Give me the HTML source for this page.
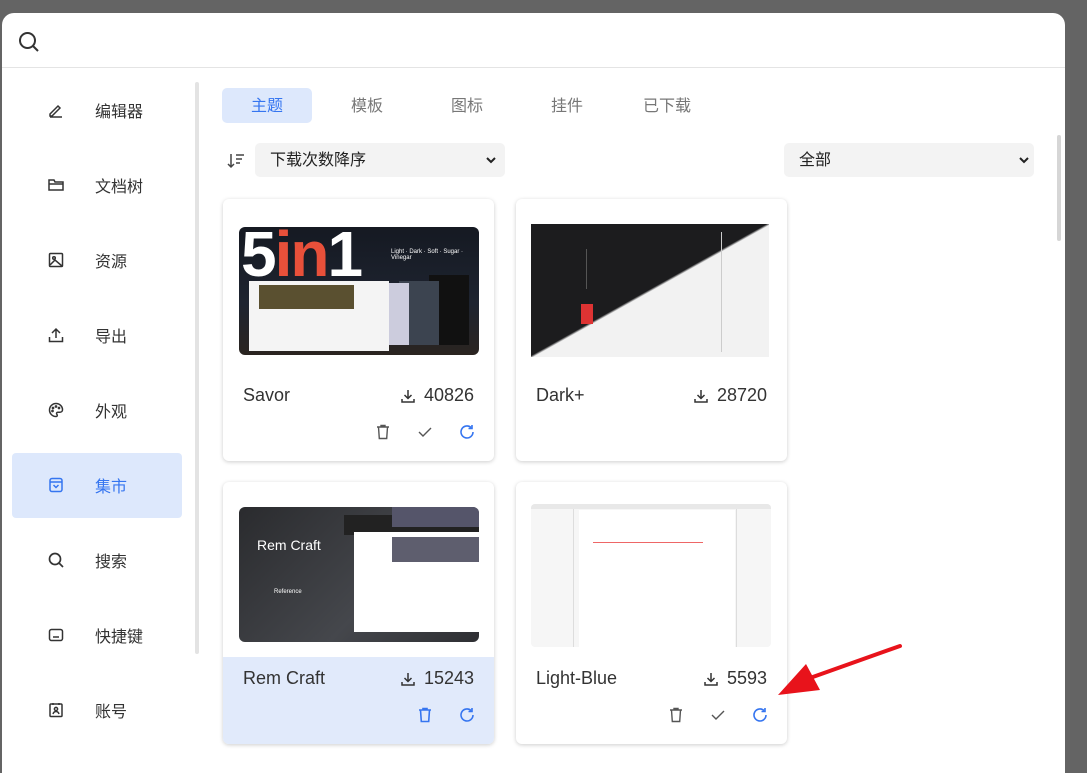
<!DOCTYPE html>
<html><head><meta charset="utf-8"><style>
*{margin:0;padding:0;box-sizing:border-box}
body{width:1087px;height:756px;background:#646464;position:relative;overflow:hidden;font-family:"Liberation Sans","Noto Sans CJK SC",sans-serif;color:#222}
.dlg{position:absolute;left:2px;top:13px;width:1063px;height:760px;background:#fff;border-radius:12px 12px 0 0;overflow:hidden}
.abs{position:absolute}
.hdr{position:absolute;left:0;top:54px;width:1063px;height:1px;background:#e4e4e4}
.nav{position:absolute;left:93px;font-size:16px;color:#333;line-height:20px;margin-top:2px}
.ico{position:absolute;left:45px;width:18px;height:18px}
.act{position:absolute;left:10px;top:440px;width:170px;height:65px;background:#dde8fc;border-radius:4px}
.tab{position:absolute;top:76px;height:35px;line-height:35px;font-size:16px;color:#777;text-align:center;width:90px}
.sel{position:absolute;top:130px;height:34px;background:#f3f3f3;border-radius:5px;font-size:16px;line-height:36px;padding-left:15px;color:#222}
.card{position:absolute;width:271px;height:262px;background:#fff;border-radius:6px;box-shadow:0 1px 4px rgba(0,0,0,.2);overflow:hidden}
.img{position:absolute;left:16px;top:28px;width:240px;height:128px;border-radius:6px;overflow:hidden}
.nm{position:absolute;left:20px;top:186px;font-size:18px;color:#333}
.dl{position:absolute;right:20px;top:186px;font-size:18px;color:#333;display:flex;align-items:center;gap:8px}
.acts{position:absolute;right:18px;top:224px;display:flex;gap:24px}
</style></head><body>
<div class="dlg">
<svg class="abs" style="left:15px;top:17px" width="24" height="24" viewBox="0 0 24 24" fill="none" stroke="#333" stroke-width="2"><circle cx="10.5" cy="10.5" r="7.5"/><path d="M16 16l5 5"/></svg>
<div class="hdr"></div>
<div class="abs" style="left:193px;top:69px;width:4px;height:572px;background:#e3e3e3;border-radius:2px"></div>
<div class="act"></div>
<svg class="ico" style="top:88px" viewBox="0 0 18 18" fill="none" stroke="#333" stroke-width="1.5"><path d="M3 13l8-8 2 2-8 8H3zM3 16h12"/></svg>
<div class="nav" style="top:88px">编辑器</div>
<svg class="ico" style="top:163px" viewBox="0 0 18 18" fill="none" stroke="#333" stroke-width="1.5"><path d="M2 4h5l1 2h8v8H2zM2 8h14"/></svg>
<div class="nav" style="top:163px">文档树</div>
<svg class="ico" style="top:238px" viewBox="0 0 18 18" fill="none" stroke="#333" stroke-width="1.5"><rect x="2.5" y="2.5" width="13" height="13" rx="1"/><circle cx="7" cy="7" r="1.3"/><path d="M3 14l5-5 7 6"/></svg>
<div class="nav" style="top:238px">资源</div>
<svg class="ico" style="top:313px" viewBox="0 0 18 18" fill="none" stroke="#333" stroke-width="1.5"><path d="M9 12V3M5 7l4-4 4 4M2.5 11v4.5h13V11"/></svg>
<div class="nav" style="top:313px">导出</div>
<svg class="ico" style="top:388px" viewBox="0 0 18 18" fill="none" stroke="#333" stroke-width="1.5"><path d="M9 2.5a6.5 6.5 0 1 0 0 13c1.5 0 1.5-1.5.8-2.3-.7-.8 0-2 1-2h2.2c1.5 0 2.5-1 2.5-2.5 0-3.5-3-6.2-6.5-6.2z"/><circle cx="6" cy="7" r=".6"/><circle cx="9" cy="5.5" r=".6"/><circle cx="12" cy="7" r=".6"/><circle cx="5.5" cy="10" r=".6"/></svg>
<div class="nav" style="top:388px">外观</div>
<svg class="ico" style="top:463px" viewBox="0 0 18 18" fill="none" stroke="#3575f0" stroke-width="1.5"><rect x="3" y="2.5" width="12" height="13" rx="2"/><path d="M3 6h12M6.5 9l2.5 2.5L11.5 9"/></svg>
<div class="nav" style="top:463px;color:#3575f0">集市</div>
<svg class="ico" style="top:538px" viewBox="0 0 18 18" fill="none" stroke="#333" stroke-width="1.7"><circle cx="8" cy="8" r="5.5"/><path d="M12 12l4 4"/></svg>
<div class="nav" style="top:538px">搜索</div>
<svg class="ico" style="top:613px" viewBox="0 0 18 18" fill="none" stroke="#333" stroke-width="1.5"><rect x="2.5" y="3.5" width="13" height="11" rx="2"/><path d="M6 11h6"/></svg>
<div class="nav" style="top:613px">快捷键</div>
<svg class="ico" style="top:688px" viewBox="0 0 18 18" fill="none" stroke="#333" stroke-width="1.5"><rect x="3" y="3" width="12" height="12.5" rx="1"/><path d="M6 2v2M12 2v2"/><circle cx="9" cy="8" r="1.6"/><path d="M6 13c.5-1.7 1.5-2.5 3-2.5s2.5.8 3 2.5"/></svg>
<div class="nav" style="top:688px">账号</div>

<div class="tab" style="left:220px;top:75px;background:#dde8fc;border-radius:5px;color:#3575f0;line-height:37px">主题</div>
<div class="tab" style="left:320px">模板</div>
<div class="tab" style="left:420px">图标</div>
<div class="tab" style="left:520px">挂件</div>
<div class="tab" style="left:620px">已下载</div>

<svg class="abs" style="left:224px;top:138px" width="20" height="20" viewBox="0 0 20 20" fill="none" stroke="#444" stroke-width="1.5"><path d="M5 3v13M2 13l3 3 3-3M10 4h8M10 8h6M10 12h4"/></svg>
<div class="sel" style="left:253px;width:250px">下载次数降序<svg class="abs" style="right:8px;top:12px" width="12" height="10" viewBox="0 0 12 10" fill="none" stroke="#222" stroke-width="2"><path d="M2 3l4 4 4-4"/></svg></div>
<div class="sel" style="left:782px;width:250px">全部<svg class="abs" style="right:4px;top:12px" width="12" height="10" viewBox="0 0 12 10" fill="none" stroke="#222" stroke-width="2"><path d="M2 3l4 4 4-4"/></svg></div>
<div class="abs" style="left:1055px;top:122px;width:4px;height:106px;background:#d6d6d6;border-radius:2px"></div>

<div class="card" style="left:221px;top:186px">
<div class="img" style="background:linear-gradient(180deg,#151922 0%,#1e2430 60%,#2a2420 100%)">
<div class="abs" style="left:2px;top:-10px;font:bold 64px 'Liberation Sans';color:#fff;letter-spacing:-2px">5<span style="color:#e8503a">in</span>1</div>
<div class="abs" style="left:152px;top:22px;font-size:6px;color:#fff">Light · Dark · Soft · Sugar · Vinegar</div>
<div class="abs" style="left:190px;top:48px;width:40px;height:70px;background:#111"></div>
<div class="abs" style="left:160px;top:54px;width:40px;height:64px;background:#3c4450"></div>
<div class="abs" style="left:120px;top:56px;width:50px;height:62px;background:#ccd"></div>
<div class="abs" style="left:10px;top:54px;width:140px;height:70px;background:#f4f4f4"></div>
<div class="abs" style="left:20px;top:58px;width:95px;height:24px;background:#5a5030"></div>
</div>
<div class="nm">Savor</div>
<div class="dl"><svg width="16" height="16" viewBox="0 0 16 16" fill="none" stroke="#333" stroke-width="1.5"><path d="M8 2v8M4.5 7L8 10.5 11.5 7M2 11v3h12v-3"/></svg>40826</div>
<div class="acts">
<svg width="18" height="18" viewBox="0 0 18 18" fill="none" stroke="#555" stroke-width="1.4"><path d="M3 4h12M7 4V2.5h4V4M4.5 4l.8 11.5h7.4L13.5 4"/></svg>
<svg width="18" height="18" viewBox="0 0 18 18" fill="none" stroke="#555" stroke-width="1.4"><path d="M3 9l4 4 8-8"/></svg>
<svg width="18" height="18" viewBox="0 0 18 18" fill="none" stroke="#3575f0" stroke-width="1.6"><path d="M15 9a6 6 0 1 1-2-4.5M14 2v3.5h-3.5"/></svg>
</div></div>

<div class="card" style="left:514px;top:186px">
<div class="img" style="left:15px;top:25px;width:238px;height:133px;border-radius:0;background:linear-gradient(to bottom right,#1c1c1e 49.5%,#f2f2f2 50.5%)">
<div class="abs" style="left:55px;top:25px;width:30px;height:40px;border-left:1px solid #555"></div>
<div class="abs" style="left:50px;top:80px;width:12px;height:20px;background:#d33"></div>
<div class="abs" style="left:190px;top:8px;width:1px;height:120px;background:#ccc"></div>
</div>
<div class="nm">Dark+</div>
<div class="dl"><svg width="16" height="16" viewBox="0 0 16 16" fill="none" stroke="#333" stroke-width="1.5"><path d="M8 2v8M4.5 7L8 10.5 11.5 7M2 11v3h12v-3"/></svg>28720</div>
</div>

<div class="card" style="left:221px;top:469px">
<div class="abs" style="left:0;top:175px;width:271px;height:87px;background:#e1eafb"></div>
<div class="img" style="top:25px;height:135px;background:linear-gradient(135deg,#2a2b2e,#45474c 60%,#2e2f33)">
<div class="abs" style="left:18px;top:30px;font-size:14px;color:#fff">Rem Craft</div>
<div class="abs" style="left:35px;top:82px;font-size:6px;color:#fff">Reference</div>
<div class="abs" style="left:105px;top:8px;width:135px;height:20px;background:#222"></div>
<div class="abs" style="left:115px;top:25px;width:125px;height:100px;background:#fff"></div>
<div class="abs" style="left:153px;top:30px;width:87px;height:25px;background:#5e5e6e"></div>
<div class="abs" style="left:153px;top:0;width:87px;height:20px;background:#55556a"></div>
</div>
<div class="nm">Rem Craft</div>
<div class="dl"><svg width="16" height="16" viewBox="0 0 16 16" fill="none" stroke="#333" stroke-width="1.5"><path d="M8 2v8M4.5 7L8 10.5 11.5 7M2 11v3h12v-3"/></svg>15243</div>
<div class="acts">
<svg width="18" height="18" viewBox="0 0 18 18" fill="none" stroke="#3575f0" stroke-width="1.6"><path d="M3 4h12M7 4V2.5h4V4M4.5 4l.8 11.5h7.4L13.5 4"/></svg>
<svg width="18" height="18" viewBox="0 0 18 18" fill="none" stroke="#3575f0" stroke-width="1.6"><path d="M15 9a6 6 0 1 1-2-4.5M14 2v3.5h-3.5"/></svg>
</div></div>

<div class="card" style="left:514px;top:469px">
<div class="img" style="left:15px;top:22px;width:240px;height:143px;border-radius:4px;background:#f6f6f6">
<div class="abs" style="left:0;top:0;width:240px;height:5px;background:#e8e8e8"></div>
<div class="abs" style="left:42px;top:5px;width:1px;height:138px;background:#ddd"></div>
<div class="abs" style="left:205px;top:5px;width:1px;height:138px;background:#ddd"></div>
<div class="abs" style="left:48px;top:6px;width:156px;height:137px;background:#fff"></div>
<div class="abs" style="left:62px;top:38px;width:110px;height:1px;background:#e66"></div>
</div>
<div class="nm">Light-Blue</div>
<div class="dl"><svg width="16" height="16" viewBox="0 0 16 16" fill="none" stroke="#333" stroke-width="1.5"><path d="M8 2v8M4.5 7L8 10.5 11.5 7M2 11v3h12v-3"/></svg>5593</div>
<div class="acts">
<svg width="18" height="18" viewBox="0 0 18 18" fill="none" stroke="#555" stroke-width="1.4"><path d="M3 4h12M7 4V2.5h4V4M4.5 4l.8 11.5h7.4L13.5 4"/></svg>
<svg width="18" height="18" viewBox="0 0 18 18" fill="none" stroke="#555" stroke-width="1.4"><path d="M3 9l4 4 8-8"/></svg>
<svg width="18" height="18" viewBox="0 0 18 18" fill="none" stroke="#3575f0" stroke-width="1.6"><path d="M15 9a6 6 0 1 1-2-4.5M14 2v3.5h-3.5"/></svg>
</div></div>
</div>
<svg class="abs" style="left:770px;top:640px" width="140" height="65" viewBox="0 0 140 65"><path d="M130 6L40 38" stroke="#e8131b" stroke-width="4" stroke-linecap="round"/><path d="M8 55L36 24 50 50z" fill="#e8131b"/></svg>
</body></html>
